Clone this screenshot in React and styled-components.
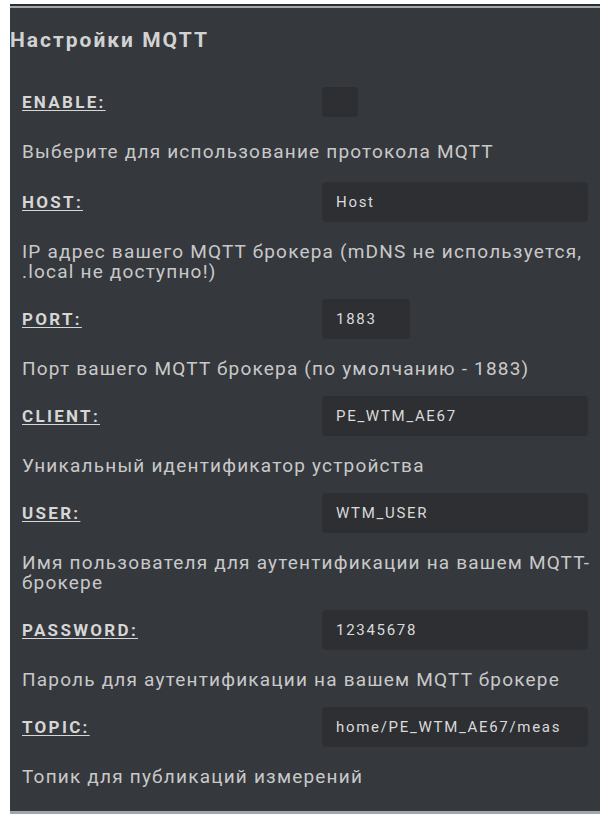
import React from 'react';
import styled, { createGlobalStyle } from 'styled-components';

const GlobalStyle = createGlobalStyle`
  html, body {
    margin: 0;
    background: #ffffff;
  }
  body {
    padding: 4px 0 0 10px;
    font-family: Roboto, 'Liberation Sans', Arial, sans-serif;
  }
`;

const fields = [
  { type: 'check', label: 'ENABLE:', desc: 'Выберите для использование протокола MQTT' },
  { label: 'HOST:', value: 'Host', desc: 'IP адрес вашего MQTT брокера (mDNS не используется, .local не доступно!)' },
  { label: 'PORT:', value: '1883', width: 88, desc: 'Порт вашего MQTT брокера (по умолчанию - 1883)' },
  { label: 'CLIENT:', value: 'PE_WTM_AE67', desc: 'Уникальный идентификатор устройства' },
  { label: 'USER:', value: 'WTM_USER', desc: 'Имя пользователя для аутентификации на вашем MQTT-брокере' },
  { label: 'PASSWORD:', value: '12345678', desc: 'Пароль для аутентификации на вашем MQTT брокере' },
  { label: 'TOPIC:', value: 'home/PE_WTM_AE67/meas', desc: 'Топик для публикаций измерений' },
];

const Panel = styled.section`
  background: #35383d;
  height: 810px;
  box-sizing: border-box;
  border-top: 2px solid #2b2d31;
  border-bottom: 3px solid #a2a6aa;
  box-shadow: inset 0 2px 0 #a3a7ab;
  color: #cfcfcf;
`;

const Title = styled.h2`
  margin: 0;
  padding-top: 22px;
  font-size: 21px;
  line-height: 24px;
  font-weight: 700;
  letter-spacing: 2px;
  color: #d2d2d2;
`;

const Fields = styled.div`
  padding: 30px 9px 0 12px;
`;

const Row = styled.div`
  display: grid;
  grid-template-columns: 300px 1fr;
  align-items: center;
  height: 40px;
  margin-right: 3px;
`;

const Label = styled.label`
  font-size: 17px;
  font-weight: 700;
  letter-spacing: 2.3px;
  text-decoration: underline;
  text-underline-offset: 2px;
  color: #d6d6d6;
`;

const Input = styled.div`
  box-sizing: border-box;
  width: ${(p) => (p.$width ? `${p.$width}px` : '100%')};
  height: 40px;
  padding: 0 14px;
  display: flex;
  align-items: center;
  background: #2d2f33;
  border-radius: 4px;
  font-size: 15px;
  letter-spacing: 1.7px;
  color: #dadada;
`;

const Check = styled.div`
  width: 36px;
  height: 30px;
  border-radius: 4px;
  background: #2d2f33;
`;

const Desc = styled.p`
  margin: 20px 0 ${(p) => (p.$wide ? 20 : 17)}px;
  font-size: 19px;
  line-height: 20px;
  letter-spacing: 1.2px;
  color: #c9c9c9;
`;

export default function App() {
  return (
    <>
      <GlobalStyle />
      <Panel>
        <Title>Настройки MQTT</Title>
        <Fields>
          {fields.map((f) => (
            <div key={f.label}>
              <Row>
                <Label>{f.label}</Label>
                {f.type === 'check' ? <Check /> : <Input $width={f.width}>{f.value}</Input>}
              </Row>
              <Desc $wide={f.type === 'check'}>{f.desc}</Desc>
            </div>
          ))}
        </Fields>
      </Panel>
    </>
  );
}
